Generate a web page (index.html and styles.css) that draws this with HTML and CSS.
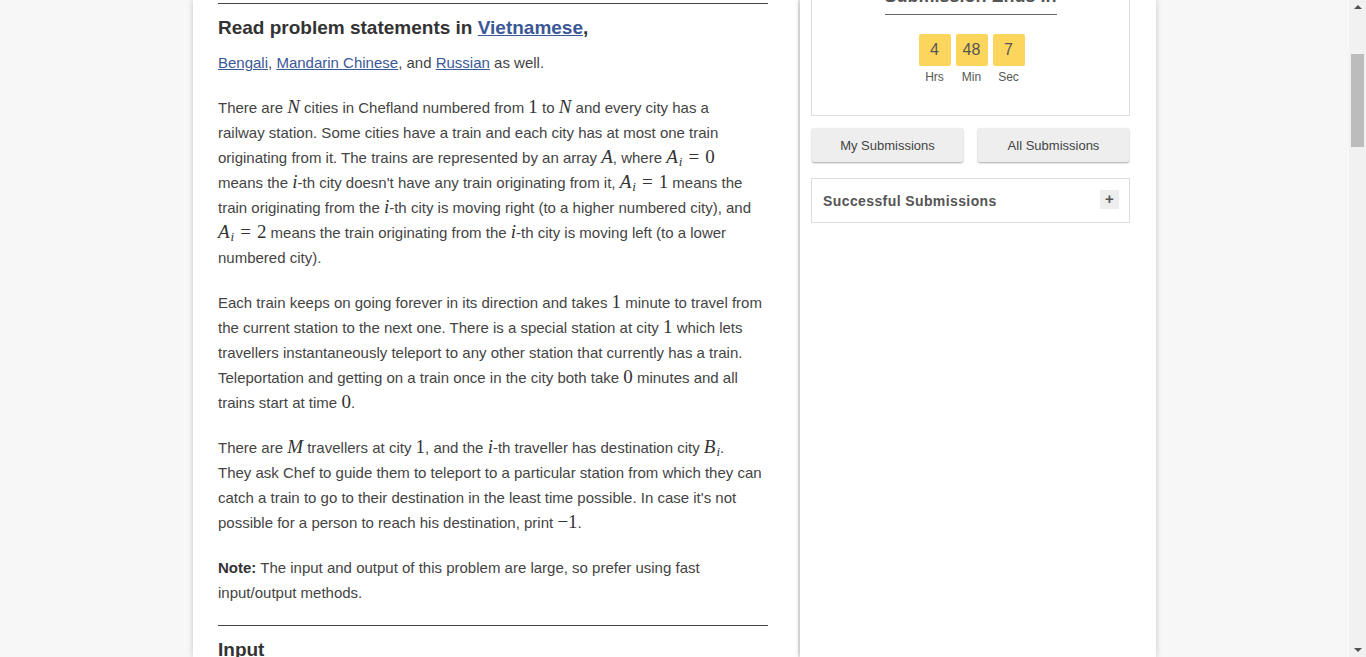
FILE: index.html
```html
<!DOCTYPE html>
<html lang="en">
<head>
<meta charset="utf-8">
<title>Problem</title>
<link rel="stylesheet" href="styles.css">
</head>
<body>
<div class="screen">
  <div class="viewport">
    <div class="container">
      <main class="problem">
        <hr class="rule top-rule">
        <h2 class="lang-head">Read problem statements in <a href="#">Vietnamese</a>,</h2>
        <p><a href="#">Bengali</a>, <a href="#">Mandarin Chinese</a>, and <a href="#">Russian</a> as well.</p>
        <p>There are <span class="m"><i>N</i></span> cities in Chefland numbered from <span class="m">1</span> to <span class="m"><i>N</i></span> and every city has a<br>railway station. Some cities have a train and each city has at most one train<br>originating from it. The trains are represented by an array <span class="m"><i>A</i></span>, where <span class="m"><i>A</i><sub>i</sub><span class="rel">=</span>0</span><br>means the <span class="m"><i>i</i></span>-th city doesn't have any train originating from it, <span class="m"><i>A</i><sub>i</sub><span class="rel">=</span>1</span> means the<br>train originating from the <span class="m"><i>i</i></span>-th city is moving right (to a higher numbered city), and<br><span class="m"><i>A</i><sub>i</sub><span class="rel">=</span>2</span> means the train originating from the <span class="m"><i>i</i></span>-th city is moving left (to a lower<br>numbered city).</p>
        <p>Each train keeps on going forever in its direction and takes <span class="m">1</span> minute to travel from<br>the current station to the next one. There is a special station at city <span class="m">1</span> which lets<br>travellers instantaneously teleport to any other station that currently has a train.<br>Teleportation and getting on a train once in the city both take <span class="m">0</span> minutes and all<br>trains start at time <span class="m">0</span>.</p>
        <p>There are <span class="m"><i>M</i></span> travellers at city <span class="m">1</span>, and the <span class="m"><i>i</i></span>-th traveller has destination city <span class="m"><i>B</i><sub>i</sub></span>.<br>They ask Chef to guide them to teleport to a particular station from which they can<br>catch a train to go to their destination in the least time possible. In case it's not<br>possible for a person to reach his destination, print <span class="m">&minus;1</span>.</p>
        <p><strong>Note:</strong> The input and output of this problem are large, so prefer using fast<br>input/output methods.</p>
        <hr class="rule section-rule">
        <h3 class="section-head">Input</h3>
      </main>
      <aside class="sidebar">
        <section class="timer-box">
          <h3 class="timer-title">Submission Ends In</h3>
          <div class="timer">
            <div class="unit"><span class="digit">4</span><span class="label">Hrs</span></div>
            <div class="unit"><span class="digit">48</span><span class="label">Min</span></div>
            <div class="unit"><span class="digit">7</span><span class="label">Sec</span></div>
          </div>
        </section>
        <div class="buttons">
          <button class="btn">My Submissions</button>
          <button class="btn">All Submissions</button>
        </div>
        <section class="success-box">
          <span class="success-title">Successful Submissions</span>
          <span class="plus">+</span>
        </section>
      </aside>
    </div>
  </div>
  <div class="scrollbar">
    <span class="arrow up"></span>
    <div class="track"><div class="thumb"></div></div>
    <span class="arrow down"></span>
  </div>
</div>
</body>
</html>
```
FILE: styles.css
```css
* { box-sizing: border-box; }
html, body {
  margin: 0;
  padding: 0;
  height: 657px;
  overflow: hidden;
}
body {
  background: #f7f7f7;
  font-family: "Liberation Sans", Arial, sans-serif;
  color: #444;
}
.screen {
  display: flex;
  height: 657px;
}
.viewport {
  flex: 1;
  overflow: hidden;
}
.container {
  width: 963px;
  margin: 0 auto;
  display: flex;
  gap: 2px;
  height: 657px;
}
.problem {
  width: 605px;
  background: #fff;
  padding: 3px 30px 0 25px;
  box-shadow: 0 0 6px rgba(0,0,0,0.2);
}
.sidebar {
  width: 356px;
  background: #fff;
  padding: 0 26px 0 11px;
  box-shadow: 0 0 6px rgba(0,0,0,0.2);
}
.rule {
  border: 0;
  border-top: 1px solid #444;
  margin: 0;
}
.lang-head {
  margin: 12px 0 0;
  font-size: 19px;
  line-height: 24px;
  color: #333;
  font-weight: bold;
}
.problem a {
  color: #3b5896;
  text-decoration: underline;
}
.problem p {
  font-size: 15px;
  line-height: 25px;
  margin: 20px 0 0;
  white-space: nowrap;
}
.lang-head + p { margin-top: 10px; }
.lang-head + p + p { margin-top: 20px; }
.problem strong { color: #333; }
.m {
  font-family: "Liberation Serif", "Times New Roman", serif;
  font-size: 19px;
  line-height: 1;
  color: #333;
  white-space: nowrap;
}
.m i { font-style: italic; }
.m sub {
  font-style: italic;
  font-size: 13px;
  vertical-align: -3px;
  line-height: 0;
  margin-left: 1px;
}
.m .rel { margin: 0 6px; }
.section-rule { margin-top: 20px; }
.section-head {
  margin: 12px 0 0;
  font-size: 19px;
  line-height: 24px;
  color: #333;
}
.timer-box {
  border: 1px solid #ddd;
  border-top: 0;
  height: 116px;
  text-align: center;
  overflow: hidden;
}
.timer-title {
  display: block;
  width: 172px;
  margin: -15px auto 0;
  font-size: 18px;
  line-height: 22px;
  color: #555;
  font-weight: bold;
  padding: 0 0 7px;
  border-bottom: 1px solid #666;
  white-space: nowrap;
}
.timer {
  display: flex;
  justify-content: center;
  gap: 5px;
  margin-top: 19px;
  padding-left: 2px;
}
.unit {
  display: flex;
  flex-direction: column;
  align-items: center;
}
.digit {
  display: block;
  min-width: 32px;
  height: 32px;
  padding: 0 4px;
  background: #fcd65c;
  border-radius: 2px;
  font-size: 16px;
  line-height: 32px;
  color: #555;
}
.label {
  font-size: 12px;
  line-height: 14px;
  margin-top: 4px;
  color: #555;
}
.buttons {
  display: flex;
  justify-content: space-between;
  margin-top: 12px;
  padding: 0 1px;
}
.btn {
  width: 151px;
  height: 34px;
  border: 0;
  border-radius: 2px;
  background: #eee;
  box-shadow: 0 1px 2px rgba(0,0,0,0.35);
  font-family: "Liberation Sans", Arial, sans-serif;
  font-size: 13px;
  color: #444;
  padding: 0;
}
.success-box {
  margin-top: 16px;
  border: 1px solid #ddd;
  height: 45px;
  display: flex;
  align-items: center;
  justify-content: space-between;
  padding: 0 10px 0 11px;
}
.success-title {
  font-size: 14px;
  font-weight: bold;
  color: #555;
  letter-spacing: 0.4px;
  margin-top: 1px;
}
.plus {
  width: 19px;
  height: 19px;
  background: #eee;
  color: #555;
  font-weight: bold;
  font-size: 15px;
  line-height: 18px;
  text-align: center;
  margin-top: -2px;
}
.scrollbar {
  width: 17px;
  height: 657px;
  background: #f1f1f1;
  display: flex;
  flex-direction: column;
  align-items: center;
}
.arrow {
  width: 0;
  height: 0;
  border-left: 4px solid transparent;
  border-right: 4px solid transparent;
  flex: none;
}
.arrow.up {
  border-bottom: 4px solid #505050;
  margin-top: 5px;
}
.arrow.down {
  border-top: 4px solid #505050;
  margin-bottom: 5px;
}
.track {
  flex: 1;
  width: 100%;
  padding: 45px 2px 0;
}
.thumb {
  height: 93px;
  background: #bcbcbc;
}
```
